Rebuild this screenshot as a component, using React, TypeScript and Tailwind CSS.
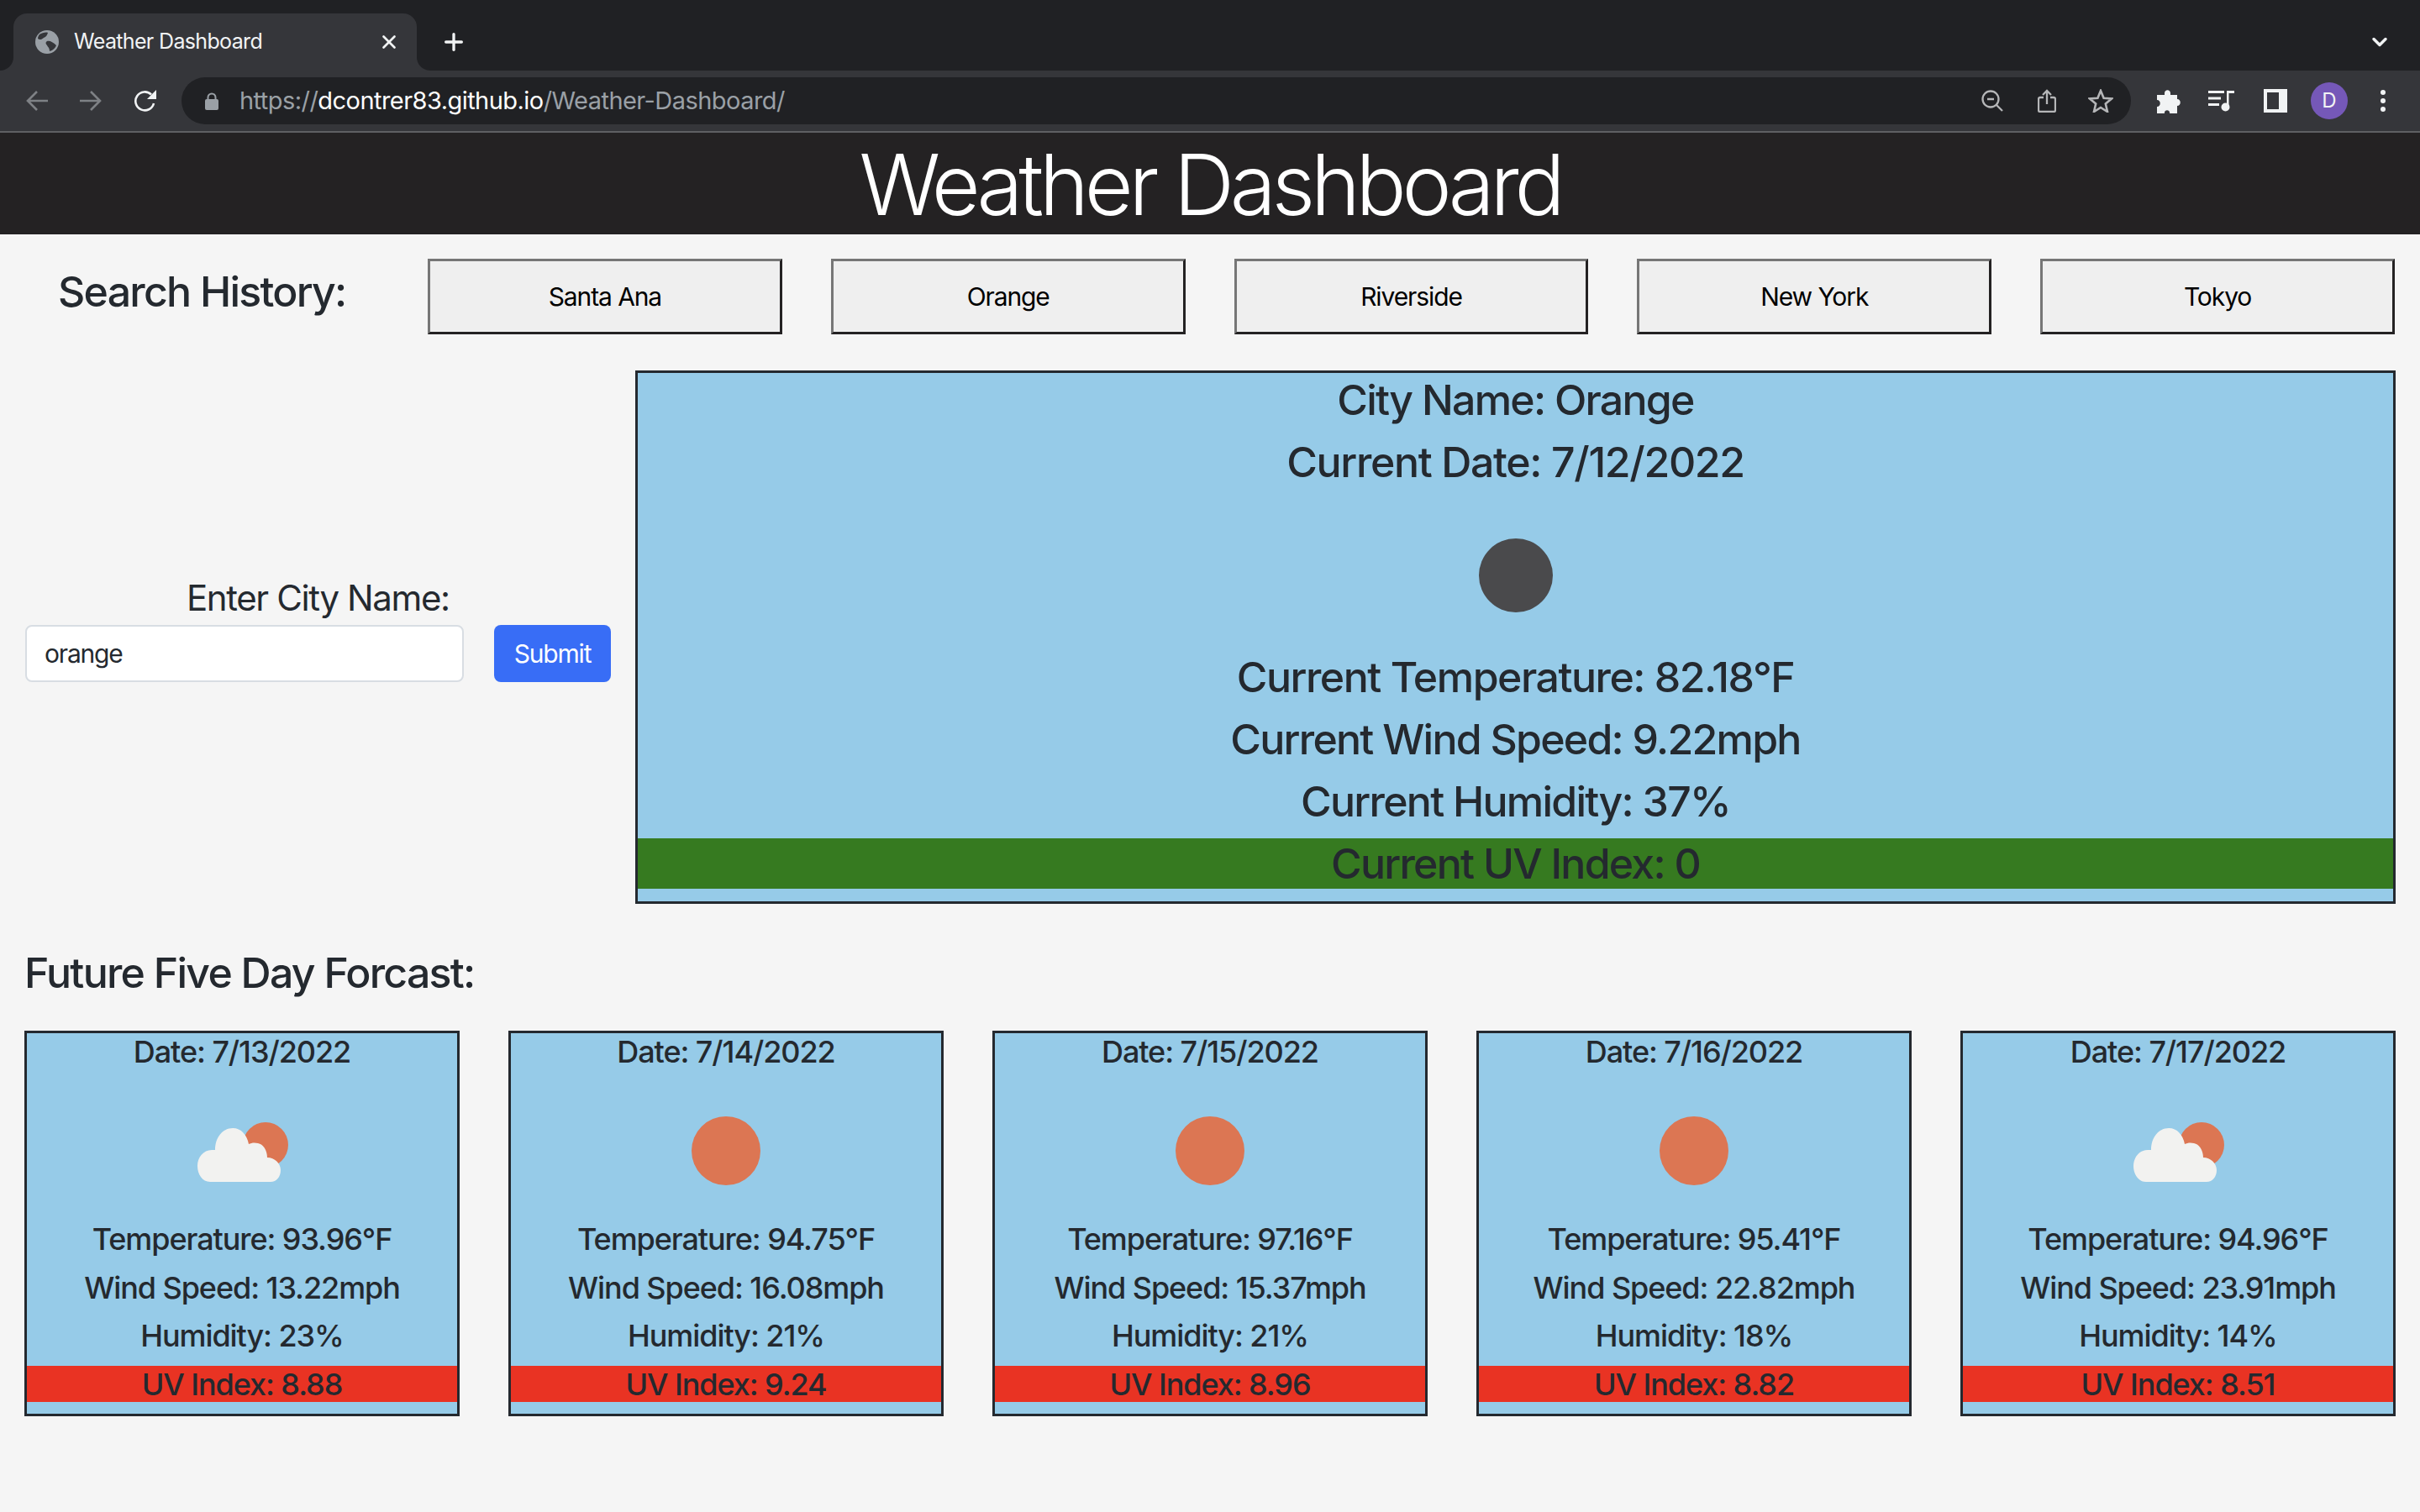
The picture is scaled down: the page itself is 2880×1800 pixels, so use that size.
import React from "react";
import { Plus, ChevronDown, X } from "lucide-react";

const cities = ["Santa Ana", "Orange", "Riverside", "New York", "Tokyo"];

const forecast = [
  { date: "7/13/2022", icon: "cloud", temp: "93.96", wind: "13.22", hum: "23", uv: "8.88" },
  { date: "7/14/2022", icon: "sun", temp: "94.75", wind: "16.08", hum: "21", uv: "9.24" },
  { date: "7/15/2022", icon: "sun", temp: "97.16", wind: "15.37", hum: "21", uv: "8.96" },
  { date: "7/16/2022", icon: "sun", temp: "95.41", wind: "22.82", hum: "18", uv: "8.82" },
  { date: "7/17/2022", icon: "cloud", temp: "94.96", wind: "23.91", hum: "14", uv: "8.51" },
];

function WeatherIcon({ kind }: { kind: string }) {
  return (
    <svg width="116" height="116" viewBox="0 0 116 116">
      {kind === "sun" ? (
        <circle cx="58" cy="58" r="41" fill="#dc7653" />
      ) : (
        <>
          <circle cx="86" cy="51" r="27" fill="#dc7653" />
          <path
            d="M20 95 C11 95 5 86 5 76 C5 66 12 57 22 57 C23.5 57 25 57 26 57 C26 42 35 31 47 31 C57 31 64 39 66 50 C69 48.5 73 48 77 49 C83 50 88 57 88 66 C97 66 104 73 104 81 C104 89 99 95 92 95 Z"
            fill="#f2f2f0"
          />
        </>
      )}
    </svg>
  );
}

function Chrome() {
  return (
    <div className="bg-[#202124]">
      <div className="flex h-[84px] items-end pl-4 pr-[34px]">
        <div className="relative flex h-[68px] w-[480px] items-center rounded-t-2xl bg-[#35363a] pl-[26px] pr-[20px]">
          <span className="absolute bottom-0 -left-4 h-4 w-4 bg-[#35363a]">
            <span className="block h-4 w-4 rounded-br-2xl bg-[#202124]" />
          </span>
          <span className="absolute bottom-0 -right-4 h-4 w-4 bg-[#35363a]">
            <span className="block h-4 w-4 rounded-bl-2xl bg-[#202124]" />
          </span>
          <svg width="28" height="28" viewBox="0 0 28 28">
            <circle cx="14" cy="14" r="14" fill="#9aa0a6" />
            <path d="M5 5 C8 3 13 2 15 3 C14 6 13 8 10 9 C8 11 5 12 3 10 C3 8 4 6 5 5 Z M14 13 C17 12 21 14 25 18 C24 21 21 24 17 25 C17 21 15 20 14 18 C12 16 12 14 14 13 Z" fill="#35363a" />
          </svg>
          <span className="ml-[18px] flex-1 text-[25px] tracking-[-0.65px] text-[#f1f3f4]">Weather Dashboard</span>
          <X size={26} color="#f1f3f4" strokeWidth={2.5} />
        </div>
        <div className="flex h-[68px] flex-1 items-center justify-between pl-[28px]">
          <Plus size={32} color="#f1f3f4" strokeWidth={2.5} />
          <ChevronDown size={28} color="#f1f3f4" strokeWidth={3} />
        </div>
      </div>
      <div className="flex h-[72px] items-center bg-[#35363a] pl-[31px]">
        <svg width="26" height="26" viewBox="0 0 26 26" fill="none" stroke="#7e8185" strokeWidth="2.6">
          <path d="M26 13 H2 M13 2 L2 13 L13 24" />
        </svg>
        <svg width="26" height="26" viewBox="0 0 26 26" fill="none" stroke="#7e8185" strokeWidth="2.6" className="ml-[38px]">
          <path d="M0 13 H24 M13 2 L24 13 L13 24" />
        </svg>
        <svg width="28" height="28" viewBox="0 0 28 28" fill="none" className="ml-[38px]">
          <path d="M21 6.5 A11 11 0 1 0 24 17" stroke="#f1f3f4" strokeWidth="2.6" />
          <path d="M27 1 V12 H16 Z" fill="#f1f3f4" />
        </svg>
        <div className="ml-[29px] flex h-[56px] w-[2320px] items-center rounded-full bg-[#202124] pl-[28px] pr-[21px]">
          <svg width="16" height="21" viewBox="0 0 16 21">
            <path d="M3.5 9 V6 A4.5 4.5 0 0 1 12.5 6 V9" fill="none" stroke="#9aa0a6" strokeWidth="2" />
            <rect x="0" y="8" width="16" height="13" rx="2" fill="#9aa0a6" />
          </svg>
          <div className="ml-[25px] flex-1 text-[29px] tracking-[-0.55px]">
            <span className="text-[#9aa0a6]">https://</span>
            <span className="text-white">dcontrer83.github.io</span>
            <span className="text-[#9aa0a6]">/Weather-Dashboard/</span>
          </div>
          <svg width="26" height="26" viewBox="0 0 26 26" fill="none" stroke="#b5b6b8" strokeWidth="2.3">
            <circle cx="11" cy="11" r="9.5" />
            <path d="M7 11 H15 M18 18 L25 25" />
          </svg>
          <svg width="22" height="28" viewBox="0 0 22 28" fill="none" stroke="#b5b6b8" strokeWidth="2.3" className="ml-[41px]">
            <path d="M7 10 H3 Q1 10 1 12 V25 Q1 27 3 27 H19 Q21 27 21 25 V12 Q21 10 19 10 H15 M11 18 V2 M6 7 L11 2 L16 7" />
          </svg>
          <svg width="30" height="28" viewBox="0 0 30 28" fill="none" stroke="#b5b6b8" strokeWidth="2.6" className="ml-[38px]">
            <path d="M15 2 L18.6 10.8 L28 11.5 L20.8 17.6 L23 27 L15 22 L7 27 L9.2 17.6 L2 11.5 L11.4 10.8 Z" />
          </svg>
        </div>
        <svg width="29" height="29" viewBox="0 0 29 29" className="ml-[30px]">
          <path d="M10 5 C10 0 17 0 17 5 L17 7 L25 7 L25 12 C30 12 30 20 25 20 L25 29 L16 29 C17 24 9 24 10 29 L1 29 L1 21 C6 21 6 13 1 13 L1 7 L10 7 Z" fill="#f1f3f4" />
        </svg>
        <svg width="32" height="26" viewBox="0 0 32 26" className="ml-[33px]">
          <path d="M0 1 H19 V4 H0 Z M0 8.5 H15 V11.5 H0 Z M0 16 H13 V19 H0 Z" fill="#f1f3f4" />
          <path d="M22 1 H31 V4 H24.5 V20 H22 Z" fill="#f1f3f4" />
          <circle cx="20.5" cy="20.5" r="5" fill="#f1f3f4" />
        </svg>
        <div className="ml-[34px] h-7 w-7 border-y-4 border-r-[10px] border-l-4 border-[#f1f3f4]" />
        <div className="ml-[28px] flex h-[44px] w-[44px] items-center justify-center rounded-full bg-[#7558b8] text-[24px] text-[#f1f3f4]">D</div>
        <div className="ml-[39px] flex flex-col gap-1">
          <span className="h-1.5 w-1.5 rounded-full bg-[#f1f3f4]" />
          <span className="h-1.5 w-1.5 rounded-full bg-[#f1f3f4]" />
          <span className="h-1.5 w-1.5 rounded-full bg-[#f1f3f4]" />
        </div>
      </div>
      <div className="h-[2px] bg-[#5f6063]" />
    </div>
  );
}

export default function App() {
  return (
    <div className="h-screen overflow-hidden bg-[#f5f5f5] font-['Inter',sans-serif] text-[#24292f]">
      <Chrome />
      <h1 className="h-[121px] bg-[#242223] text-center text-[100px] leading-[124px] font-light tracking-[-0.052em] text-white">Weather Dashboard</h1>
      <div className="px-[29px] pt-[29px]">
        <div className="mr-[1px] flex items-start">
          <h3 className="w-[480px] pl-[40px] pt-[9px] text-[50px] leading-[60px] font-medium tracking-[-0.035em]">Search History:</h3>
          <div className="flex flex-1 gap-[58px]">
            {cities.map((c) => (
              <button key={c} className="h-[90px] flex-1 border-[3px] border-t-[#767676] border-l-[#767676] border-r-[#242223] border-b-[#242223] bg-[#efefef] text-[30px] tracking-[-1.1px] text-black">
                {c}
              </button>
            ))}
          </div>
        </div>
        <div className="mt-[43px] flex gap-[29px]">
          <div className="w-[698px] pl-[1px] pt-[240px]">
            <label className="block pl-[192px] text-[42px] leading-[62px] tracking-[-0.033em]">Enter City Name:</label>
            <div className="flex gap-[36px] pt-[1px]">
              <input readOnly value="orange" className="h-[68px] w-[522px] rounded-lg border-2 border-[#d8dde3] bg-white px-[21px] text-[30px] tracking-[-0.04em] text-[#24292f]" />
              <button className="h-[68px] w-[139px] rounded-lg bg-[#386df6] text-[30px] tracking-[-0.04em] text-white">Submit</button>
            </div>
          </div>
          <div className="h-[635px] flex-1 border-[3px] border-[#24292f] bg-[#96cbe8] pt-[2px] text-center text-[50px] font-medium tracking-[-0.035em]">
            <p className="h-[74px] leading-[60px]">City Name: Orange</p>
            <p className="h-[74px] leading-[60px] tracking-[-0.027em]">Current Date: 7/12/2022</p>
            <div className="flex h-[182px] items-center justify-center">
              <div className="h-[88px] w-[88px] rounded-full bg-[#4a4a4c]" />
            </div>
            <p className="h-[74px] leading-[60px] tracking-[-0.03em]">Current Temperature: 82.18°F</p>
            <p className="h-[74px] leading-[60px]">Current Wind Speed: 9.22mph</p>
            <p className="h-[74px] leading-[60px]">Current Humidity: 37%</p>
            <p className="h-[60px] bg-[#367a20] leading-[60px]">Current UV Index: 0</p>
          </div>
        </div>
        <h2 className="mt-[53px] text-[50px] leading-[58px] font-medium tracking-[-0.035em]">Future Five Day Forcast:</h2>
        <div className="mt-[40px] flex gap-[58px]">
          {forecast.map((d) => (
            <div key={d.date} className="h-[459px] flex-1 border-[3px] border-[#24292f] bg-[#96cbe8] pt-[2px] text-center text-[36px] font-medium tracking-[-0.03em]">
              <p className="h-[44px] leading-[41px]">Date: {d.date}</p>
              <div className="flex h-[177px] items-center justify-center pt-[11px]">
                <WeatherIcon kind={d.icon} />
              </div>
              <p className="h-[57.5px] leading-[44px]">Temperature: {d.temp}°F</p>
              <p className="h-[57.5px] leading-[44px]">Wind Speed: {d.wind}mph</p>
              <p className="h-[57.5px] leading-[44px]">Humidity: {d.hum}%</p>
              <p className="h-[43px] bg-[#e93323] leading-[44px]">UV Index: {d.uv}</p>
            </div>
          ))}
        </div>
      </div>
    </div>
  );
}
